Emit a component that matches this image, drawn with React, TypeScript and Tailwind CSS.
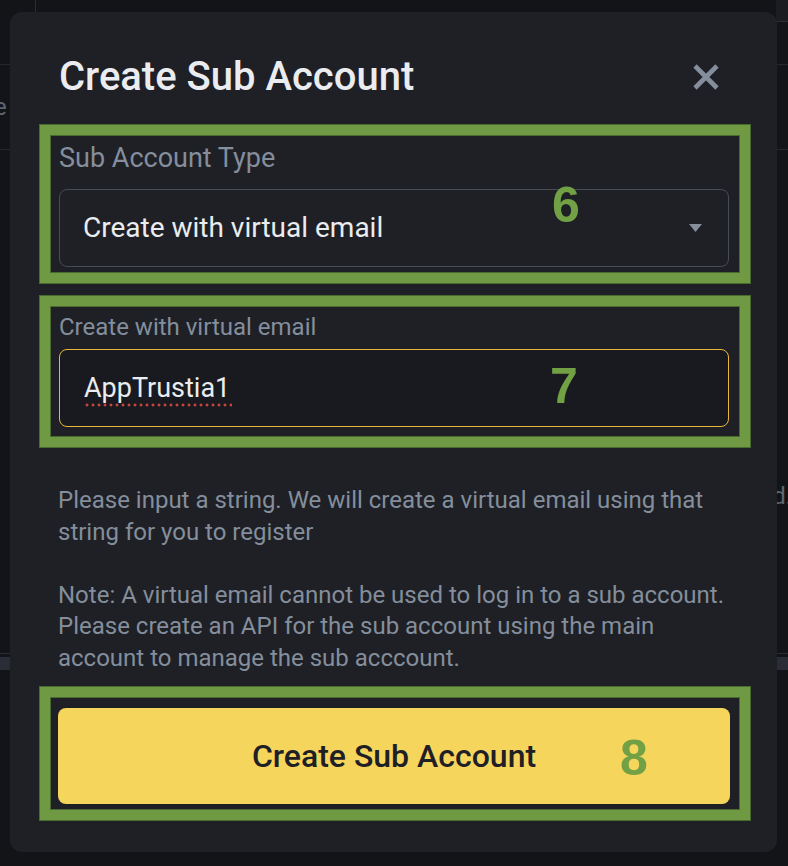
import { ReactNode } from "react";

const font = { fontFamily: "Roboto, 'Liberation Sans', sans-serif" };

interface boxProps {
  children: ReactNode;
  className?: string;
}

// green annotation frame drawn around a step
const StepBox = (props: boxProps) => {
  return (
    <div
      className={`relative w-[710px] border-[10px] border-[#6f9a43] shadow-[0_0_0_1px_#4b6a2f,inset_0_0_0_1px_#4b6a2f] ${props.className ?? ""}`}
    >
      {props.children}
    </div>
  );
};

const StepNumber = ({ n, className }: { n: string; className: string }) => (
  <span
    className={`absolute text-[50px] leading-[50px] font-bold text-[#72a045] ${className}`}
    style={{ fontFamily: "'Liberation Sans', Arial, sans-serif" }}
  >
    {n}
  </span>
);

const Background = () => {
  return (
    <div className="flex flex-col h-[866px] text-[#5e6673] text-[24px]">
      <div className="flex h-[65px] border-b border-[#24272d]">
        <div className="w-[36px] h-[12px] border-r border-[#2a2d33]" />
        <div className="flex-1" />
        <div className="w-[12px] h-[22px] bg-[#1b1d22] border-b border-[#2a2d33]" />
      </div>
      <div className="flex h-[85px] border-b border-[#24272d] items-center">
        <span className="-ml-[6px]">e</span>
      </div>
      <div className="flex h-[364px] items-end justify-end">
        <span className="mr-[-4px]">d.</span>
      </div>
      <div className="mt-[139px] h-[17px] border-t border-[#2a2d33] flex flex-col">
        <div className="mt-[3px] flex-1 bg-[#2a2d35]" />
      </div>
    </div>
  );
};

const App = () => {
  return (
    <div className="relative w-[788px] h-[866px] overflow-hidden bg-[#131418]" style={font}>
      <Background />

      <div className="absolute left-[10px] top-[12px] w-[767px] rounded-[12px] bg-[#1e2025] pt-[41px] pb-[32px]">
        <div className="flex items-center justify-between pl-[49px] pr-[57px]">
          <h2 className="text-[40px] leading-[48px] font-medium text-[#eaecef]">
            Create Sub Account
          </h2>
          <svg width="28" height="28" viewBox="0 0 28 28" fill="none">
            <path d="M3 3L25 25M25 3L3 25" stroke="#848e9c" strokeWidth="4.6" />
          </svg>
        </div>

        <div className="mt-[24px] pl-[30px] flex flex-col">
          <StepBox className="pl-[9px] pr-[11px] pt-[6px] pb-[6px]">
            <p className="text-[27px] leading-[34px] text-[#848e9c]">Sub Account Type</p>
            <div className="mt-[14px] h-[78px] w-[670px] rounded-[8px] border border-[#474d57] flex items-center justify-between pl-[23px] pr-[26px]">
              <span className="text-[28px] text-[#eaecef]">Create with virtual email</span>
              <svg width="13" height="8" viewBox="0 0 13 8">
                <path d="M0 0H13L6.5 8Z" fill="#848e9c" />
              </svg>
            </div>
            <StepNumber n="6" className="left-[502px] top-[45px]" />
          </StepBox>

          <StepBox className="mt-[13px] pl-[9px] pr-[11px] pt-[6px] pb-[10px]">
            <p className="text-[24px] leading-[30px] text-[#848e9c]">Create with virtual email</p>
            <div className="mt-[7px] h-[78px] w-[670px] rounded-[8px] border border-[#e8b73a] bg-[#181a1f] flex items-center pl-[24px]">
              <span className="relative text-[27px] text-[#eaecef]">
                AppTrustia1
                <span className="absolute left-0 right-[-2px] bottom-[1px] h-[4px] bg-[radial-gradient(circle,#c9463d_1.3px,transparent_1.7px)] bg-[length:6px_4px]" />
              </span>
            </div>
            <StepNumber n="7" className="left-[500px] top-[55px]" />
          </StepBox>

          <div className="mt-[38px] pl-[18px] text-[24px] leading-[31.5px] text-[#848e9c] whitespace-nowrap">
            <p>
              Please input a string. We will create a virtual email using that
              <br />
              string for you to register
            </p>
            <p className="mt-[31.5px]">
              Note: A virtual email cannot be used to log in to a sub account.
              <br />
              Please create an API for the sub account using the main
              <br />
              account to manage the sub acccount.
            </p>
          </div>

          <StepBox className="mt-[13px] pl-[8px] pt-[11px] pb-[6px]">
            <button className="h-[96px] w-[672px] rounded-[8px] bg-[#f6d55c] text-[32px] font-medium text-[#1e2026] flex items-center justify-center">
              Create Sub Account
            </button>
            <StepNumber n="8" className="left-[570px] top-[36px]" />
          </StepBox>
        </div>
      </div>
    </div>
  );
};

export default App;
